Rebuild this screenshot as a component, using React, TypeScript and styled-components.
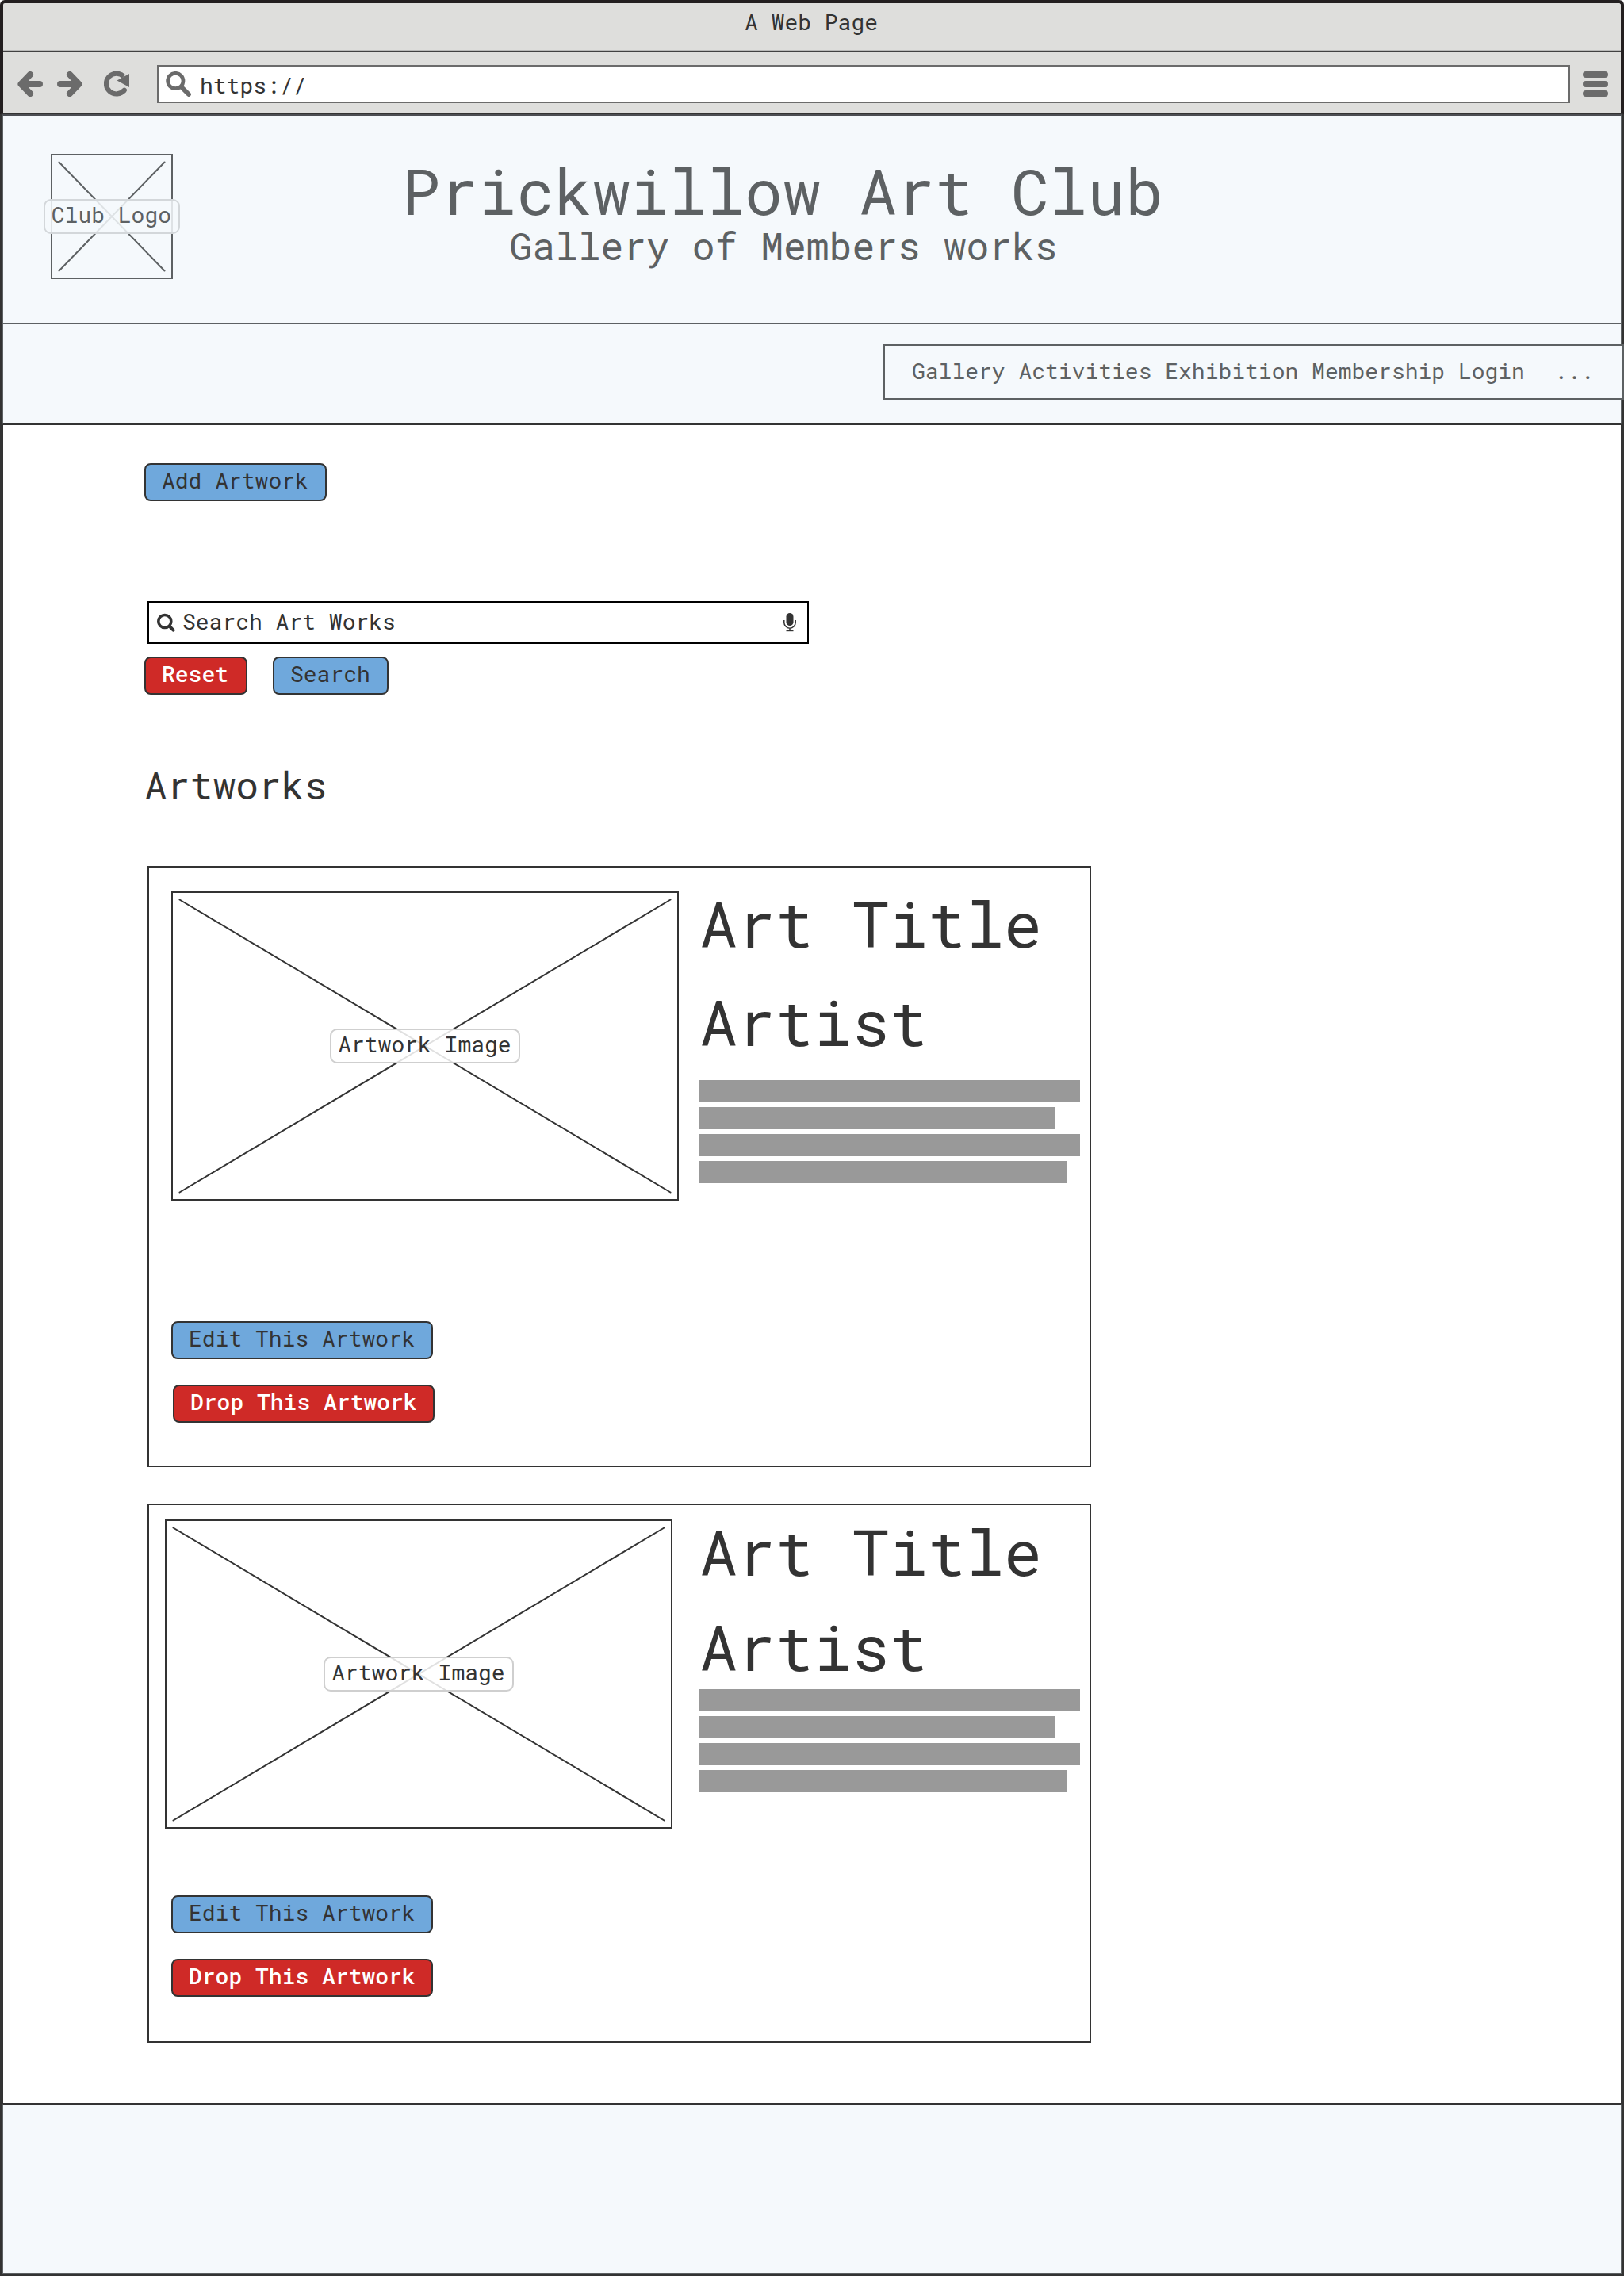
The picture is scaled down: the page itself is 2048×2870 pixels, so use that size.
import React from "react";
import styled, { createGlobalStyle } from "styled-components";

const ink = "#333333";
const slate = "#5d6163";
const chromeGrey = "#dededc";
const iconGrey = "#6b6b6b";
const tint = "#f5f9fc";

const GlobalStyle = createGlobalStyle`
  *, *::before, *::after { box-sizing: border-box; }
  body { margin: 0; background: #ffffff; }
  h1, h2, h3, p { margin: 0; font-weight: 400; }
  button { margin: 0; }
  svg { display: block; flex: none; }
`;

const Page = styled.div`
  display: flex;
  flex-direction: column;
  width: 2048px;
  height: 2870px;
  color: ${ink};
  font-family: "Roboto Mono", "DejaVu Sans Mono", monospace;
  font-size: 28px;
  white-space: pre;
`;

const Chrome = styled.header`
  display: flex;
  flex-direction: column;
  height: 144px;
  border: 4px solid #231f20;
  border-bottom: 2px solid ${ink};
  border-radius: 6px 6px 0 0;
  background: ${chromeGrey};
`;

const TitleBar = styled.div`
  height: 62px;
  padding-right: 2px;
  border-bottom: 2px solid #414141;
  box-shadow: inset 0 -1px 0 #b9b9b8;
  line-height: 48px;
  text-align: center;
`;

const Toolbar = styled.div`
  display: flex;
  align-items: center;
  flex: 1;
  padding: 4px 16px 0 18px;
`;

const NavIcon = styled.svg<{ $gap: number }>`
  width: 32px;
  height: 32px;
  margin-right: ${(p) => p.$gap}px;
  fill: none;
  stroke: ${iconGrey};
  stroke-linecap: round;
  stroke-linejoin: round;
`;

const AddressBar = styled.div`
  display: flex;
  align-items: center;
  flex: 1;
  height: 48px;
  margin-right: 16px;
  padding-left: 9px;
  border: 2px solid ${iconGrey};
  background: #ffffff;
`;

const AddressText = styled.span`
  padding-top: 3px;
`;

const Site = styled.div`
  display: flex;
  flex-direction: column;
  flex: 1;
  border: 2px solid ${ink};
  border-top: 0;
`;

const Banner = styled.section`
  display: flex;
  align-items: flex-start;
  height: 265px;
  padding-left: 60px;
  border: 2px solid ${slate};
  border-top-color: #4c4e53;
  background: ${tint};
  color: ${slate};
`;

const BannerText = styled.div`
  width: 960px;
  margin: 54px 0 0 290px;
  text-align: center;
`;

const ClubName = styled.h1`
  margin: 0 0 2px -2px;
  font-size: 80px;
  line-height: 80px;
`;

const Tagline = styled.p`
  font-size: 48px;
  line-height: 56px;
`;

const NavBand = styled.nav`
  display: flex;
  justify-content: flex-end;
  height: 127px;
  padding-top: 25px;
  border: 2px solid ${slate};
  border-top: 0;
  border-bottom-color: ${ink};
  background: ${tint};
  color: ${slate};
`;

const NavMenu = styled.div`
  position: relative;
  display: flex;
  align-items: center;
  gap: 37px;
  width: 934px;
  height: 70px;
  margin-right: -4px;
  padding: 0 0 3px 34px;
  border: 2px solid ${slate};
  background: ${tint};
`;

const NavLinks = styled.div`
  display: flex;
  gap: 16.8px;
`;

const Main = styled.main`
  display: flex;
  flex-direction: column;
  align-items: flex-start;
  height: 2116px;
  padding: 48px 0 0 178px;
  border: solid ${ink};
  border-width: 0 2px;
  background: #ffffff;
`;

const Button = styled.button<{ $danger?: boolean; $width: number; $shift?: number }>`
  width: ${(p) => p.$width}px;
  height: 48px;
  margin-left: ${(p) => p.$shift ?? 0}px;
  padding: 0 0 4px 20px;
  border: 2px solid ${ink};
  border-radius: 8px;
  background: ${(p) => (p.$danger ? "#cf2a27" : "#6fa8dc")};
  color: ${(p) => (p.$danger ? "#ffffff" : ink)};
  font: inherit;
  font-weight: ${(p) => (p.$danger ? 500 : 400)};
  line-height: 40px;
  text-align: left;
  white-space: pre;
`;

const SearchField = styled.div`
  display: flex;
  align-items: center;
  justify-content: space-between;
  width: 834px;
  height: 54px;
  margin: 126px 0 0 4px;
  padding: 0 14px 0 9px;
  border: 2px solid #000000;
`;

const SearchHint = styled.span`
  flex: 1;
  padding: 0 0 3px 9px;
`;

const SearchActions = styled.div`
  display: flex;
  gap: 32px;
  margin-top: 16px;
`;

const SectionTitle = styled.h2`
  margin: 86px 0 28px;
  font-size: 48px;
  line-height: 56px;
`;

const Card = styled.article<{ $height: number }>`
  display: flex;
  flex-direction: column;
  width: 1190px;
  height: ${(p) => p.$height}px;
  margin: 46px 0 0 4px;
  border: 2px solid ${ink};
`;

const CardBody = styled.div<{ $left: number; $height: number }>`
  display: flex;
  height: ${(p) => p.$height}px;
  padding-left: ${(p) => p.$left}px;
`;

const Frame = styled.div<{ $w: number; $h: number; $top: number; $tone: string; $fill: string }>`
  display: grid;
  grid-template: 100% / 100%;
  align-items: center;
  justify-items: center;
  flex: none;
  width: ${(p) => p.$w}px;
  height: ${(p) => p.$h}px;
  margin-top: ${(p) => p.$top}px;
  border: 2px solid ${(p) => p.$tone};
  background: ${(p) => p.$fill};
  color: ${(p) => p.$tone};
`;

const Cross = styled.svg`
  grid-area: 1 / 1;
  stroke: currentColor;
  stroke-width: 2;
  stroke-linecap: round;
`;

const FrameLabel = styled.span<{ $soft: boolean }>`
  grid-area: 1 / 1;
  z-index: 1;
  height: 44px;
  padding: 0 9.2px 0 8px;
  border: 2px solid ${(p) => (p.$soft ? "#d3d7da" : "#cfcfcf")};
  border-radius: 9px;
  background: ${(p) => (p.$soft ? "rgba(245, 249, 252, 0.85)" : "rgba(255, 255, 255, 0.85)")};
  line-height: 35px;
`;

const Details = styled.div<{ $left: number; $top: number }>`
  display: flex;
  flex-direction: column;
  margin: ${(p) => p.$top}px 0 0 ${(p) => p.$left}px;
`;

const DetailLine = styled.h3<{ $after: number }>`
  margin: 0 0 ${(p) => p.$after}px;
  font-size: 80px;
  line-height: 96px;
`;

const Copy = styled.div`
  display: flex;
  flex-direction: column;
  gap: 6px;
`;

const CopyBar = styled.div<{ $width: number }>`
  width: ${(p) => p.$width}px;
  height: 28px;
  background: #999999;
`;

const CardActions = styled.div`
  display: flex;
  flex-direction: column;
  gap: 32px;
  padding-left: 28px;
`;

const Footer = styled.footer`
  flex: 1;
  border: 2px solid ${slate};
  border-top-color: ${ink};
  background: ${tint};
`;

type PlaceholderProps = { label: string; w: number; h: number; top: number; soft?: boolean };

function Placeholder({ label, w, h, top, soft = false }: PlaceholderProps) {
  const iw = w - 4;
  const ih = h - 4;
  return (
    <Frame $w={w} $h={h} $top={top} $tone={soft ? slate : ink} $fill={soft ? tint : "#ffffff"}>
      <Cross width={iw} height={ih} viewBox={`0 0 ${iw} ${ih}`}>
        <path d={`M8.5 8.5L${iw - 8.5} ${ih - 8.5}M${iw - 8.5} 8.5L8.5 ${ih - 8.5}`} />
      </Cross>
      <FrameLabel $soft={soft}>{label}</FrameLabel>
    </Frame>
  );
}

type ArtworkProps = {
  height: number;
  bodyHeight: number;
  left: number;
  imageTop: number;
  textLeft: number;
  textTop: number;
  titleGap: number;
  copyGap: number;
  dropShift: number;
};

function ArtworkCard(p: ArtworkProps) {
  return (
    <Card $height={p.height}>
      <CardBody $left={p.left} $height={p.bodyHeight}>
        <Placeholder label="Artwork Image" w={640} h={390} top={p.imageTop} />
        <Details $left={p.textLeft} $top={p.textTop}>
          <DetailLine $after={p.titleGap}>Art Title</DetailLine>
          <DetailLine $after={p.copyGap}>Artist</DetailLine>
          <Copy>
            {[480, 448, 480, 464].map((width, i) => (
              <CopyBar key={i} $width={width} />
            ))}
          </Copy>
        </Details>
      </CardBody>
      <CardActions>
        <Button $width={330}>Edit This Artwork</Button>
        <Button $danger $width={330} $shift={p.dropShift}>Drop This Artwork</Button>
      </CardActions>
    </Card>
  );
}

const links = ["Gallery", "Activities", "Exhibition", "Membership", "Login"];

export default function App() {
  return (
    <Page>
      <GlobalStyle />
      <Chrome>
        <TitleBar>A Web Page</TitleBar>
        <Toolbar>
          <NavIcon $gap={18} viewBox="0 0 32 32" strokeWidth={8}>
            <path d="M16 4L4.500 16L16 28M6 16H28" />
          </NavIcon>
          <NavIcon $gap={27} viewBox="0 0 32 32" strokeWidth={8}>
            <path d="M16 4L27.500 16L16 28M26 16H4" />
          </NavIcon>
          <NavIcon $gap={35} viewBox="0 0 32 32" strokeWidth={6.200}>
            <path d="M25.800 23.800A12.900 12.900 0 1 1 25 6.500" strokeLinecap="butt" />
            <path d="M25.800 23.800L25.500 24.100" />
            <path d="M32 3V20L16.500 11.500Z" fill={iconGrey} stroke="none" />
          </NavIcon>
          <AddressBar>
            <NavIcon $gap={11} viewBox="0 0 32 32">
              <circle cx="12.300" cy="12" r="9.700" strokeWidth="4.700" />
              <path d="M20 20L29 29" strokeWidth="5.800" />
            </NavIcon>
            <AddressText>https://</AddressText>
          </AddressBar>
          <NavIcon $gap={0} viewBox="0 0 32 32" strokeWidth={8}>
            <path d="M4 4H28M4 16H28M4 28H28" />
          </NavIcon>
        </Toolbar>
      </Chrome>
      <Site>
        <Banner>
          <Placeholder label="Club Logo" w={154} h={158} top={48} soft />
          <BannerText>
            <ClubName>Prickwillow Art Club</ClubName>
            <Tagline>Gallery of Members works</Tagline>
          </BannerText>
        </Banner>
        <NavBand>
          <NavMenu>
            <NavLinks>
              {links.map((l) => (
                <span key={l}>{l}</span>
              ))}
            </NavLinks>
            <span>...</span>
          </NavMenu>
        </NavBand>
        <Main>
          <Button $width={230}>Add Artwork</Button>
          <SearchField>
            <svg width="24" height="24" viewBox="0 0 24 24" fill="none" stroke={ink} strokeLinecap="round">
              <circle cx="10.800" cy="10.500" r="8" strokeWidth="3.600" />
              <path d="M17 17L21.500 21.700" strokeWidth="4" />
            </svg>
            <SearchHint>Search Art Works</SearchHint>
            <svg width="16" height="24" viewBox="0 0 16 24" fill="none" stroke={ink}>
              <rect x="3.500" y="0" width="9" height="16" rx="4.500" fill={ink} stroke="none" />
              <path d="M.8 9V12A7.200 7.200 0 0 0 15.200 12V9M8 19V22" strokeWidth="1.500" />
              <path d="M3.500 22.200H12.500" strokeWidth="2" />
            </svg>
          </SearchField>
          <SearchActions>
            <Button $danger $width={130}>Reset</Button>
            <Button $width={146}>Search</Button>
          </SearchActions>
          <SectionTitle>Artworks</SectionTitle>
          <ArtworkCard
            height={758} bodyHeight={572} left={28} imageTop={30}
            textLeft={26} textTop={22} titleGap={28} copyGap={26} dropShift={2}
          />
          <ArtworkCard
            height={680} bodyHeight={492} left={20} imageTop={18}
            textLeft={34} textTop={10} titleGap={24} copyGap={6} dropShift={0}
          />
        </Main>
        <Footer />
      </Site>
    </Page>
  );
}
